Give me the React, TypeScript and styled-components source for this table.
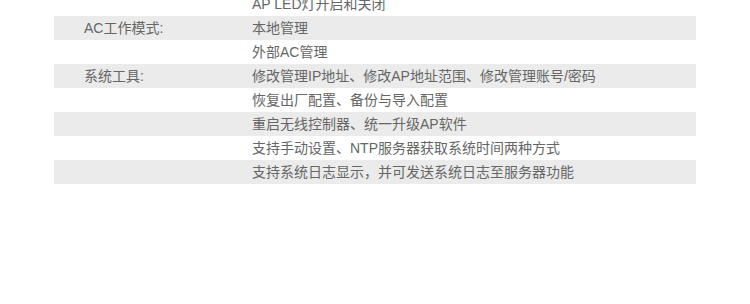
import React from 'react';
import styled, { createGlobalStyle } from 'styled-components';

const GlobalStyle = createGlobalStyle`
  html, body {
    margin: 0;
    padding: 0;
    background: #ffffff;
  }
  body {
    font-family: "Liberation Sans", "Noto Sans CJK SC", sans-serif;
    overflow: hidden;
  }
`;

const Page = styled.div`
  width: 750px;
  height: 304px;
  overflow: hidden;
  background: #ffffff;
`;

const SpecTable = styled.div`
  display: flex;
  flex-direction: column;
  width: 642px;
  margin: -8px 0 0 54px;
`;

const Row = styled.div<{ shaded: boolean }>`
  display: grid;
  grid-template-columns: 198px 1fr;
  height: 24px;
  line-height: 24px;
  background: ${props => (props.shaded ? '#ebebeb' : 'transparent')};
  color: #666666;
  font-size: 14px;
  white-space: nowrap;
`;

const Label = styled.span`
  padding-left: 30px;
`;

const Value = styled.span``;

interface SpecRow {
  label?: string;
  value: string;
}

const rows: SpecRow[] = [
  { value: 'AP LED灯开启和关闭' },
  { label: 'AC工作模式:', value: '本地管理' },
  { value: '外部AC管理' },
  { label: '系统工具:', value: '修改管理IP地址、修改AP地址范围、修改管理账号/密码' },
  { value: '恢复出厂配置、备份与导入配置' },
  { value: '重启无线控制器、统一升级AP软件' },
  { value: '支持手动设置、NTP服务器获取系统时间两种方式' },
  { value: '支持系统日志显示，并可发送系统日志至服务器功能' },
];

export default function App() {
  return (
    <Page>
      <GlobalStyle />
      <SpecTable>
        {rows.map((row, i) => (
          <Row key={i} shaded={i % 2 === 1}>
            <Label>{row.label}</Label>
            <Value>{row.value}</Value>
          </Row>
        ))}
      </SpecTable>
    </Page>
  );
}
